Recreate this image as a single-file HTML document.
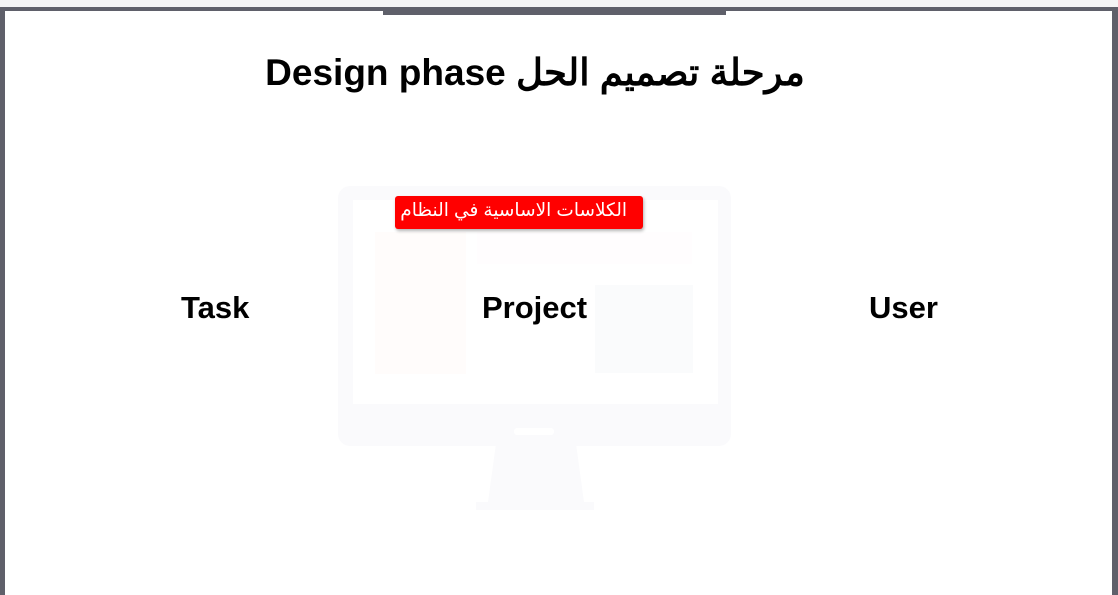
<!DOCTYPE html>
<html><head><meta charset="utf-8"><style>
html,body{margin:0;padding:0;width:1118px;height:595px;overflow:hidden;background:#fff;position:relative;font-family:"Liberation Sans","Noto Sans CJK SC",sans-serif}
.abs{position:absolute}
</style></head><body>
<div class="abs" style="left:0;top:0;width:1118px;height:7px;background:#f4f4f5"></div>
<div class="abs" style="left:0;top:7px;width:1118px;height:4px;background:#5f606a"></div>
<div class="abs" style="left:0;top:7px;width:5px;height:588px;background:#5f606a"></div>
<div class="abs" style="left:1112px;top:7px;width:6px;height:588px;background:#5f606a"></div>
<div class="abs" style="left:383px;top:11px;width:343px;height:4px;background:#5f606a"></div>

<div class="abs" style="left:0;top:51px;width:1070px;text-align:center;font-size:37px;font-weight:bold;color:#000;direction:rtl;white-space:nowrap">مرحلة تصميم الحل Design phase</div>

<div class="abs" style="left:338px;top:186px;width:393px;height:260px;background:#fafafc;border-radius:12px"></div>
<div class="abs" style="left:353px;top:200px;width:365px;height:204px;background:#fff"></div>
<div class="abs" style="left:375px;top:232px;width:91px;height:142px;background:#fffcfb"></div>
<div class="abs" style="left:477px;top:232px;width:215px;height:32px;background:#fffdfe"></div>
<div class="abs" style="left:595px;top:285px;width:98px;height:88px;background:#fafbfc"></div>
<div class="abs" style="left:514px;top:428px;width:40px;height:7px;background:#fff;border-radius:3px"></div>
<div class="abs" style="left:488px;top:446px;width:96px;height:56px;background:#fafafc;clip-path:polygon(8% 0,92% 0,100% 100%,0 100%)"></div>
<div class="abs" style="left:476px;top:502px;width:118px;height:8px;background:#fafafc"></div>

<div class="abs" style="left:395px;top:196px;width:248px;height:33px;background:#ff0000;border-radius:3px;box-shadow:1px 2px 3px rgba(0,0,0,.3)"></div>
<div class="abs" style="left:395px;top:200px;width:232px;text-align:right;direction:rtl;color:#fff;font-size:18.5px;line-height:20px;white-space:nowrap;font-family:'Liberation Sans','DejaVu Sans',sans-serif">الكلاسات الاساسية في النظام</div>

<div class="abs" style="left:181px;top:290px;font-size:31px;font-weight:bold">Task</div>
<div class="abs" style="left:482px;top:290px;font-size:31px;font-weight:bold">Project</div>
<div class="abs" style="left:869px;top:290px;font-size:31px;font-weight:bold">User</div>
</body></html>
